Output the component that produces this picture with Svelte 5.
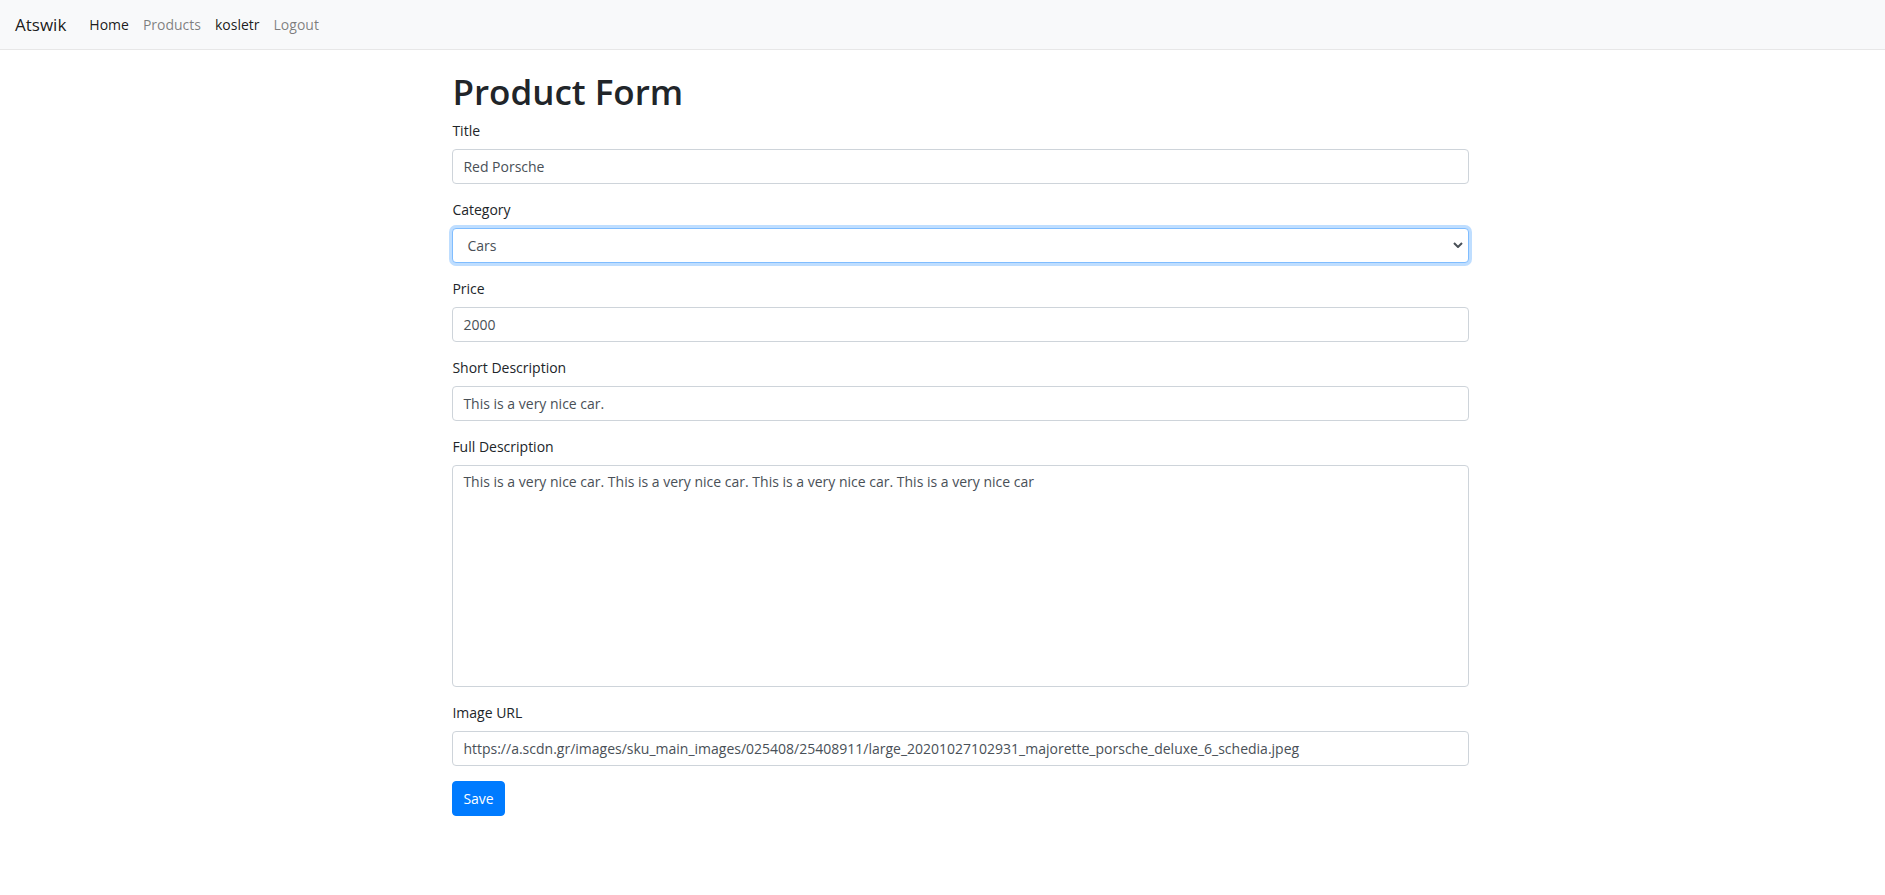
<script>
  import { onMount } from 'svelte';

  let title = $state('Red Porsche');
  let category = $state('Cars');
  let price = $state('2000');
  let shortDescription = $state('This is a very nice car.');
  let fullDescription = $state('This is a very nice car. This is a very nice car. This is a very nice car. This is a very nice car');
  let imageUrl = $state('https://a.scdn.gr/images/sku_main_images/025408/25408911/large_20201027102931_majorette_porsche_deluxe_6_schedia.jpeg');
  let categorySelect;

  const links = [
    { text: 'Home', active: true },
    { text: 'Products', active: false },
    { text: 'kosletr', active: true },
    { text: 'Logout', active: false }
  ];

  onMount(() => categorySelect.focus());
</script>

<nav class="navbar">
  <a class="brand" href="#home">Atswik</a>
  <div class="links">
    {#each links as link}
      <a class="link" class:active={link.active} href="#{link.text}">{link.text}</a>
    {/each}
  </div>
</nav>

<main class="container">
  <h1>Product Form</h1>
  <form onsubmit={(e) => e.preventDefault()}>
    <div class="group">
      <label for="title">Title</label>
      <input class="control" id="title" type="text" bind:value={title} />
    </div>
    <div class="group">
      <label for="category">Category</label>
      <div class="select">
        <select class="control" id="category" bind:value={category} bind:this={categorySelect}>
          <option>Cars</option>
        </select>
        <svg width="10" height="6" viewBox="0 0 10 6" aria-hidden="true">
          <path d="M1 1l4 4 4-4" fill="none" stroke="#495057" stroke-width="2" />
        </svg>
      </div>
    </div>
    <div class="group">
      <label for="price">Price</label>
      <input class="control" id="price" type="text" bind:value={price} />
    </div>
    <div class="group">
      <label for="short">Short Description</label>
      <input class="control" id="short" type="text" bind:value={shortDescription} />
    </div>
    <div class="group">
      <label for="full">Full Description</label>
      <textarea class="control" id="full" rows="10" spellcheck="false" bind:value={fullDescription}></textarea>
    </div>
    <div class="group">
      <label for="image">Image URL</label>
      <input class="control" id="image" type="text" bind:value={imageUrl} />
    </div>
    <button class="save" type="submit">Save</button>
  </form>
</main>

<style>
  :global(body) {
    margin: 0;
    background: #fff;
    color: #212529;
    font-family: "Open Sans", "Noto Sans", sans-serif;
    font-size: 14px;
    line-height: 22px;
  }

  :global(*) {
    box-sizing: border-box;
  }

  .navbar {
    display: flex;
    align-items: center;
    min-height: 50px;
    padding: 5px 15px;
    background: #f8f9fa;
    border-bottom: 1px solid #e7e7e7;
  }

  .brand {
    margin-right: 16px;
    font-size: 17px;
    color: rgba(0, 0, 0, 0.9);
    text-decoration: none;
  }

  .links {
    display: flex;
  }

  .link {
    padding: 7px;
    color: rgba(0, 0, 0, 0.5);
    text-decoration: none;
  }

  .link.active {
    color: rgba(0, 0, 0, 0.9);
  }

  .container {
    width: 53.95%;
    margin-left: 24%;
    padding: 20px 0;
  }

  h1 {
    margin: 0 0 6px;
    font-size: 35px;
    font-weight: 600;
    line-height: 44px;
  }

  .group {
    margin-bottom: 15px;
  }

  label {
    display: block;
    width: fit-content;
    margin-bottom: 7px;
  }

  .control {
    display: block;
    width: 100%;
    height: 35px;
    padding: 5px 10px;
    border: 1px solid #ced4da;
    border-radius: 4px;
    background: #fff;
    color: #495057;
    font: inherit;
    outline: 0;
  }

  .control:focus {
    border-color: #80bdff;
    box-shadow: 0 0 0 3px rgba(0, 123, 255, 0.25);
  }

  .select {
    position: relative;
  }

  select.control {
    appearance: none;
    padding-left: 14px;
  }

  .select svg {
    position: absolute;
    top: 14px;
    right: 6px;
    pointer-events: none;
  }

  textarea.control {
    height: auto;
    line-height: 21px;
    resize: none;
  }

  .save {
    display: block;
    height: 35px;
    padding: 5px 10px;
    border: 1px solid #007bff;
    border-radius: 4px;
    background: #007bff;
    color: #fff;
    font: inherit;
  }
</style>
